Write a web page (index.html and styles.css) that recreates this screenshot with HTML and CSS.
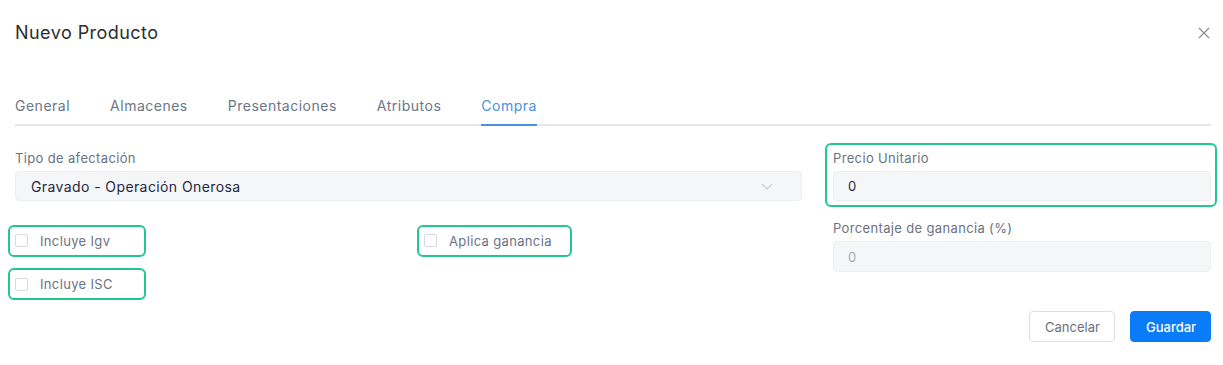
FILE: index.html
```html
<!DOCTYPE html>
<html lang="es">
<head>
<meta charset="utf-8">
<title>Nuevo Producto</title>
<link rel="stylesheet" href="styles.css">
</head>
<body>
<div class="modal">
  <header class="modal-header">
    <h1 class="modal-title">Nuevo Producto</h1>
    <button class="close" type="button" aria-label="Cerrar">
      <svg width="12" height="12" viewBox="0 0 12 12"><path d="M1 1L11 11M11 1L1 11" stroke="#8a8f98" stroke-width="1.2" fill="none"/></svg>
    </button>
  </header>

  <nav class="tabs">
    <span class="tab">General</span>
    <span class="tab">Almacenes</span>
    <span class="tab">Presentaciones</span>
    <span class="tab">Atributos</span>
    <span class="tab active">Compra</span>
  </nav>

  <div class="form-grid">
    <div class="field span-2">
      <label class="label">Tipo de afectación</label>
      <div class="control select">
        <span class="value">Gravado - Operación Onerosa</span>
        <svg class="chevron" width="12" height="7" viewBox="0 0 12 7"><path d="M1 1L6 6L11 1" stroke="#c9ccd2" stroke-width="1.1" fill="none"/></svg>
      </div>
    </div>

    <div class="field highlight">
      <label class="label">Precio Unitario</label>
      <div class="control"><span class="value">0</span></div>
    </div>

    <div class="checks">
      <label class="check w-igv"><span class="box"></span><span>Incluye Igv</span></label>
      <label class="check w-igv"><span class="box"></span><span>Incluye ISC</span></label>
    </div>

    <div class="checks">
      <label class="check w-gan"><span class="box"></span><span>Aplica ganancia</span></label>
    </div>

    <div class="field">
      <label class="label">Porcentaje de ganancia (%)</label>
      <div class="control disabled"><span class="value">0</span></div>
    </div>
  </div>

  <footer class="modal-footer">
    <button class="btn btn-light" type="button">Cancelar</button>
    <button class="btn btn-primary" type="button">Guardar</button>
  </footer>
</div>
</body>
</html>
```

FILE: styles.css
```css
* { box-sizing: border-box; }

html, body {
  margin: 0;
  background: #ffffff;
}

body {
  font-family: "Inter", "Open Sans", sans-serif;
  color: #2b2f36;
}

.modal {
  padding: 22px 12px 0 15px;
  width: 1223px;
}

.modal-header {
  display: flex;
  justify-content: space-between;
  align-items: center;
  height: 22px;
}

.modal-title {
  margin: 0;
  font-size: 18px;
  font-weight: 400;
  line-height: 22px;
  letter-spacing: 0.45px;
  color: #2d2d2d;
}

.close {
  border: 0;
  background: none;
  padding: 0;
  margin-right: 1px;
  width: 12px;
  height: 12px;
  display: flex;
}

.tabs {
  display: flex;
  gap: 40px;
  margin-top: 52px;
  border-bottom: 2px solid #e6e7ea;
}

.tab {
  font-size: 14px;
  line-height: 20px;
  letter-spacing: 0.5px;
  padding-bottom: 8px;
  color: #6a7689;
  margin-bottom: -2px;
  border-bottom: 2px solid transparent;
}

.tab.active {
  color: #4b91e2;
  border-bottom-color: #4b91e2;
}

.form-grid {
  display: grid;
  grid-template-columns: 378px 378px 378px;
  column-gap: 31px;
  row-gap: 18px;
  margin-top: 23px;
}

.span-2 { grid-column: span 2; }

.field { position: relative; }

.label {
  display: block;
  font-size: 13px;
  line-height: 18px;
  letter-spacing: 0.35px;
  color: #6b7280;
  margin-bottom: 4px;
}

.control {
  height: 30px;
  background: #f5f6f8;
  border: 1px solid #eceef2;
  border-radius: 4px;
  display: flex;
  align-items: center;
  justify-content: space-between;
  padding: 0 14px;
}

.value {
  font-size: 13px;
  color: #1f2940;
}

.select .value {
  padding-left: 1px;
  font-size: 14px;
  letter-spacing: 0.4px;
}

.chevron { margin-right: 14px; }

.disabled { height: 31px; }
.disabled .value { color: #a6abb3; }

.highlight::after {
  content: "";
  position: absolute;
  top: -6px;
  bottom: -6px;
  left: -8px;
  right: -6px;
  border: 2px solid #22c78e;
  border-radius: 6px;
}

.checks {
  display: flex;
  flex-direction: column;
  gap: 23.5px;
  padding-top: 11.5px;
}

.check {
  position: relative;
  display: flex;
  align-items: center;
  gap: 12px;
  height: 20px;
  font-size: 13px;
  letter-spacing: 0.35px;
  color: #6b7388;
}

.check::after {
  content: "";
  position: absolute;
  top: -6px;
  bottom: -6px;
  left: -7px;
  right: -7px;
  border: 2px solid #22c78e;
  border-radius: 6px;
}

.w-igv { width: 124px; }
.w-gan { width: 141px; }

.box {
  width: 13px;
  height: 13px;
  border: 1px solid #d6d9de;
  border-radius: 2px;
  background: #fff;
  flex: none;
}

.modal-footer {
  display: flex;
  justify-content: flex-end;
  gap: 15px;
  margin-top: 17px;
}

.btn {
  height: 31px;
  border-radius: 4px;
  font-family: inherit;
  font-size: 13px;
  padding: 0 15px;
  cursor: pointer;
}

.btn-light {
  width: 86px;
  background: #fff;
  border: 1px solid #dcdfe4;
  color: #6b7079;
}

.btn-primary {
  width: 81px;
  background: #0b7cf7;
  border: 1px solid #0b7cf7;
  color: #fff;
  font-weight: 500;
}
```
